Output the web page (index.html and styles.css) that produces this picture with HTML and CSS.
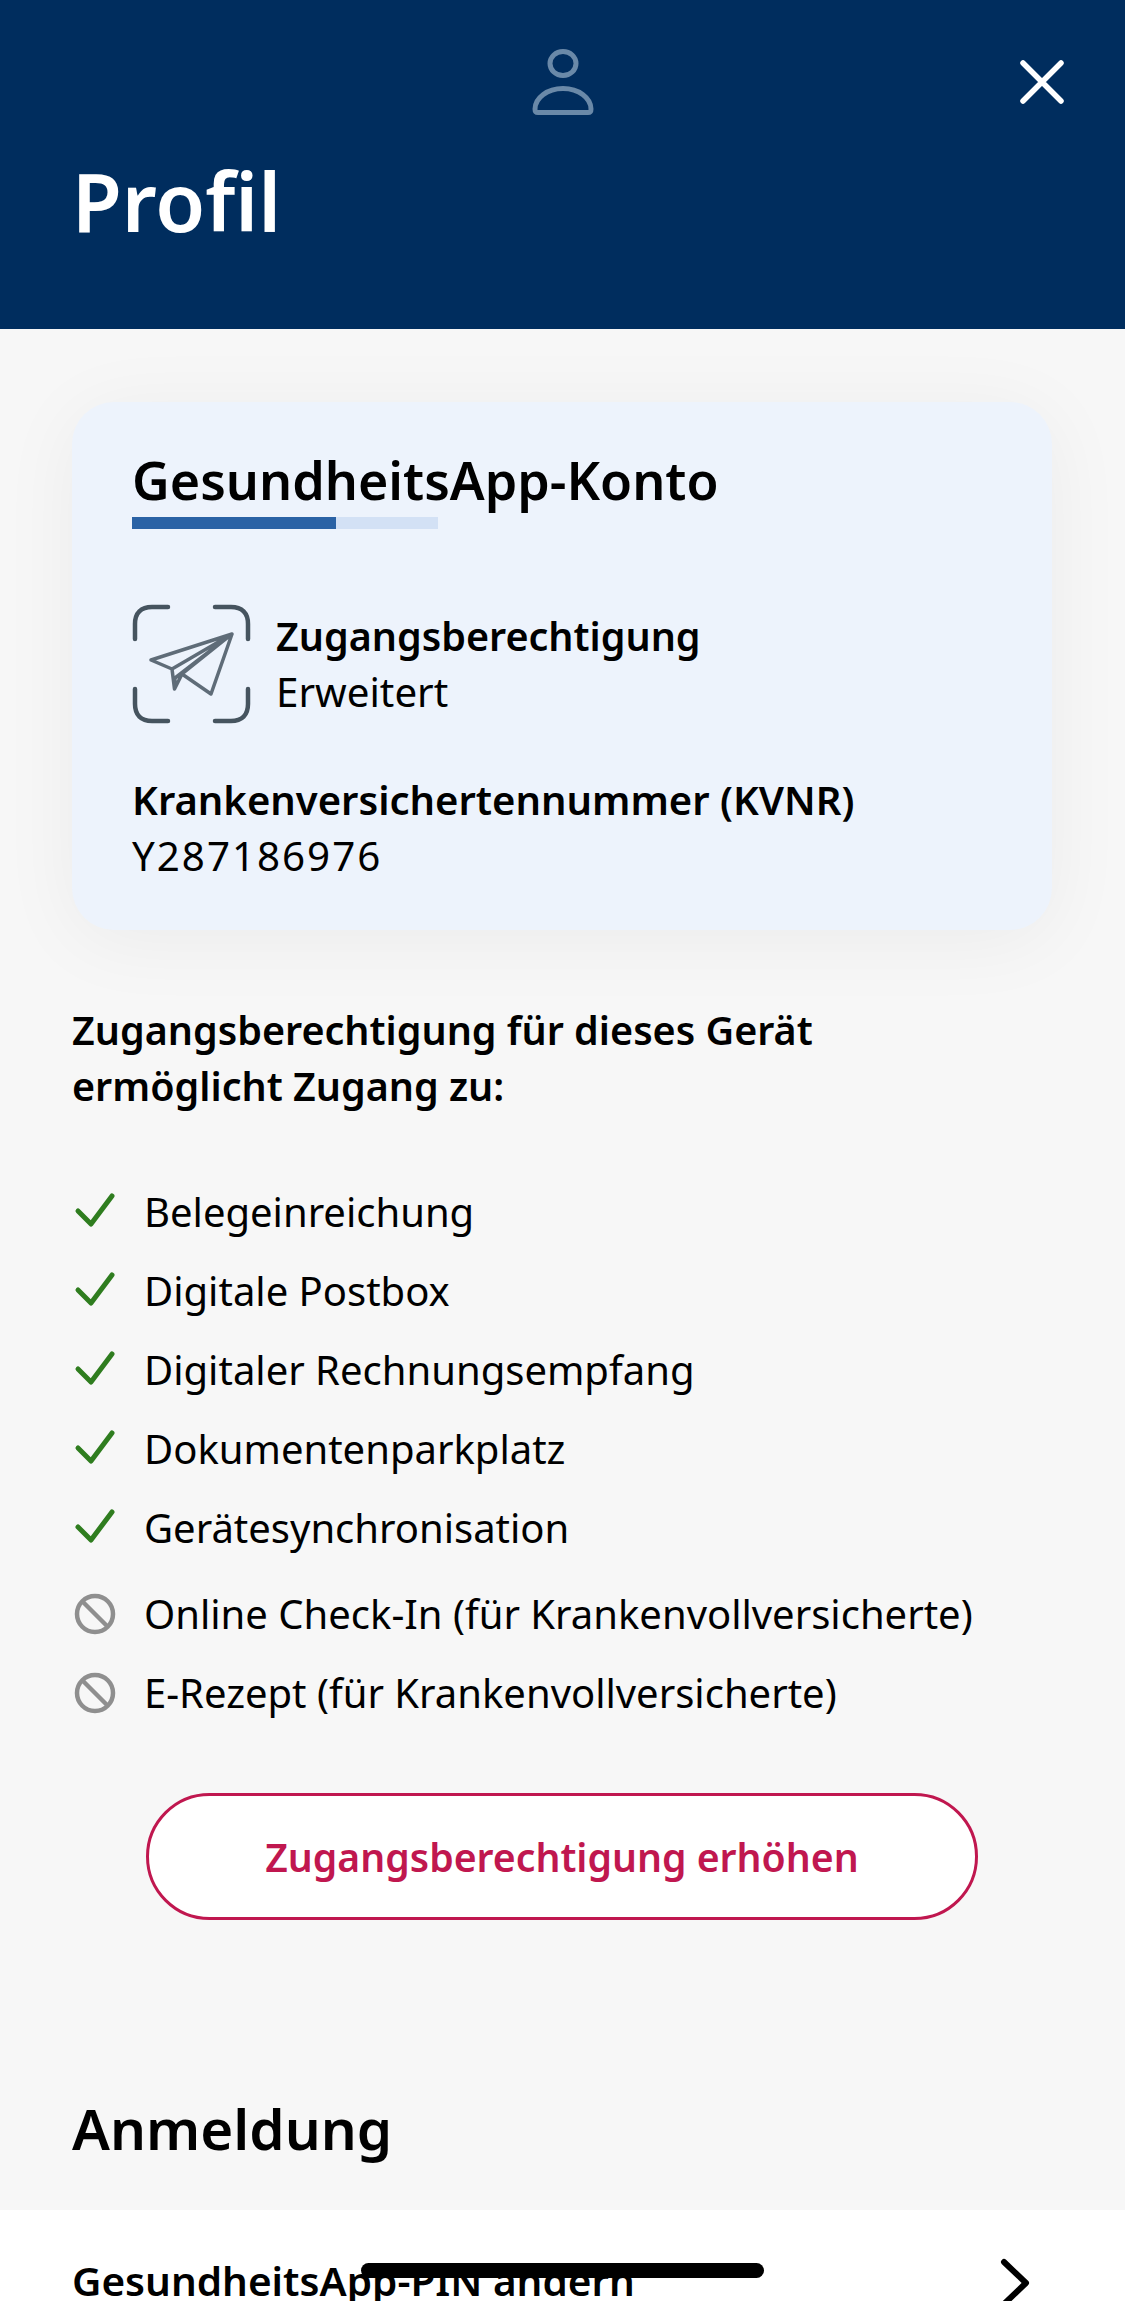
FILE: index.html
```html
<!DOCTYPE html>
<html lang="de">
<head>
    <meta charset="UTF-8">
    <title>Profil</title>
    <link rel="stylesheet" href="styles.css">
</head>
<body>

<header class="top">
    <div class="top-bar">
        <svg class="user-icon" viewBox="0 0 70 70" fill="none" stroke="#6a89a8" stroke-width="5">
            <ellipse cx="35" cy="17.500" rx="13" ry="12"/>
            <path d="M7 63 C7 52 19 42.500 35 42.500 C51 42.500 63 52 63 63 C63 65.500 62 66.500 60 66.500 H10 C8 66.500 7 65.500 7 63 Z" stroke-linejoin="round"/>
        </svg>
        <svg class="close-icon" viewBox="0 0 44 44" fill="none" stroke="#fff" stroke-width="5.500" stroke-linecap="round">
            <path d="M3 3 L41 41 M41 3 L3 41"/>
        </svg>
    </div>
    <h1>Profil</h1>
</header>

<main class="content">
    <section class="card">
        <h2>GesundheitsApp-Konto</h2>
        <div class="level"><div class="level-fill"></div></div>

        <div class="access">
            <svg class="access-icon" viewBox="0 0 120 120" fill="none" stroke="#46545f" stroke-linecap="round" stroke-linejoin="round">
                <path stroke-width="4.500" d="M3 35 V20 C3 9 9 3 20 3 H36 M83 3 H99 C110 3 116 9 116 20 V35 M3 85 V100 C3 111 9 117 20 117 H36 M83 117 H99 C110 117 116 111 116 100 V85"/>
                <path stroke="#5f6c78" stroke-width="3.500" d="M100 30 L19 56 L40 65 Z M100 30 L79 90 L50 70 Z M100 30 L43 74 M40 65 L42.500 85 L50 70 M43 74 L42.500 85"/>
            </svg>
            <div>
                <div class="strong">Zugangsberechtigung</div>
                <div>Erweitert</div>
            </div>
        </div>

        <div class="strong kvnr-label">Krankenversichertennummer (KVNR)</div>
        <div class="kvnr">Y287186976</div>
    </section>

    <p class="strong intro">Zugangsberechtigung für dieses Gerät<br>ermöglicht Zugang zu:</p>

    <ul class="features">
        <li>
            <svg class="check" viewBox="0 0 44 40" fill="none" stroke="#2f7d1f" stroke-width="5" stroke-linecap="round" stroke-linejoin="round"><path d="M5 19 L18 32 L39 4"/></svg>
            Belegeinreichung
        </li>
        <li>
            <svg class="check" viewBox="0 0 44 40" fill="none" stroke="#2f7d1f" stroke-width="5" stroke-linecap="round" stroke-linejoin="round"><path d="M5 19 L18 32 L39 4"/></svg>
            Digitale Postbox
        </li>
        <li>
            <svg class="check" viewBox="0 0 44 40" fill="none" stroke="#2f7d1f" stroke-width="5" stroke-linecap="round" stroke-linejoin="round"><path d="M5 19 L18 32 L39 4"/></svg>
            Digitaler Rechnungsempfang
        </li>
        <li>
            <svg class="check" viewBox="0 0 44 40" fill="none" stroke="#2f7d1f" stroke-width="5" stroke-linecap="round" stroke-linejoin="round"><path d="M5 19 L18 32 L39 4"/></svg>
            Dokumentenparkplatz
        </li>
        <li>
            <svg class="check" viewBox="0 0 44 40" fill="none" stroke="#2f7d1f" stroke-width="5" stroke-linecap="round" stroke-linejoin="round"><path d="M5 19 L18 32 L39 4"/></svg>
            Gerätesynchronisation
        </li>
        <li class="first-off">
            <svg class="ban" viewBox="0 0 44 44" fill="none" stroke="#8f8f8f" stroke-width="4.500"><circle cx="22" cy="22" r="18"/><path d="M9 9 L35 35"/></svg>
            Online Check-In (für Krankenvollversicherte)
        </li>
        <li>
            <svg class="ban" viewBox="0 0 44 44" fill="none" stroke="#8f8f8f" stroke-width="4.500"><circle cx="22" cy="22" r="18"/><path d="M9 9 L35 35"/></svg>
            E-Rezept (für Krankenvollversicherte)
        </li>
    </ul>

    <button class="raise">Zugangsberechtigung erhöhen</button>

    <h2 class="section-title">Anmeldung</h2>
</main>

<div class="menu-row">
    <span class="strong row-label">GesundheitsApp-PIN ändern</span>
    <svg class="chevron" viewBox="0 0 30 50" fill="none" stroke="#000" stroke-width="6" stroke-linecap="round" stroke-linejoin="round"><path d="M4 4 L26 25 L4 46"/></svg>
</div>

<div class="home-bar"></div>

</body>
</html>
```

FILE: styles.css
```css
html, body {
    margin: 0;
    height: 2301px;
    overflow: hidden;
}
body {
    position: relative;
    background-color: #f7f7f7;
    color: #000;
    font-family: "Noto Sans", Arial, sans-serif;
    font-size: 40.3px;
    line-height: 56px;
}
svg {
    display: block;
    flex: none;
}
.strong {
    font-size: 39.5px;
    font-weight: 600;
}

/* header */
.top {
    height: 329px;
    box-sizing: border-box;
    background-color: #002d5e;
    color: white;
    padding: 46px 61px 0 72px;
}
.top-bar {
    position: relative;
    height: 70px;
    display: flex;
    justify-content: center;
}
.user-icon {
    width: 70px;
    height: 70px;
    margin-right: 11px;
}
.close-icon {
    position: absolute;
    top: 14px;
    right: 0;
    width: 44px;
    height: 44px;
}
.top h1 {
    margin: 35px 0 0;
    font-size: 81px;
    line-height: 100px;
    font-weight: 600;
}

/* content */
.content {
    padding: 73px 73px 0 72px;
    height: 1881px;
    box-sizing: border-box;
}
.card {
    height: 528px;
    box-sizing: border-box;
    padding: 48px 60px 0;
    background-color: #edf3fc;
    border-radius: 42px;
    box-shadow: 0 10px 80px rgba(0, 0, 0, 0.05);
}
.card h2 {
    margin: 0;
    font-size: 52px;
    line-height: 60px;
    font-weight: 600;
}
.level {
    width: 306px;
    height: 12px;
    margin-top: 7px;
    background-color: #d3e1f5;
}
.level-fill {
    width: 204px;
    height: 100%;
    background-color: #2a62a5;
}
.access {
    display: flex;
    align-items: center;
    gap: 24px;
    margin-top: 75px;
    margin-bottom: 48px;
}
.access-icon {
    width: 120px;
    height: 120px;
}
.kvnr-label {
    font-size: 40px;
}
.kvnr {
    letter-spacing: 2px;
}
.intro {
    margin: 72px 0 0;
}
.features {
    list-style: none;
    margin: 58px 0 0;
    padding: 0;
    font-size: 40px;
}
.features li {
    position: relative;
    height: 79px;
    display: flex;
    align-items: center;
    padding-left: 72px;
}
.features .first-off {
    margin-top: 7px;
}
.check {
    position: absolute;
    left: 1px;
    top: 20px;
    width: 44px;
    height: 40px;
}
.ban {
    position: absolute;
    left: 1px;
    top: 18px;
    width: 44px;
    height: 44px;
}
.raise {
    display: block;
    width: 832px;
    height: 127px;
    margin: 61px 0 0 74px;
    background-color: white;
    border: 3px solid #c0174f;
    border-radius: 64px;
    color: #c0174f;
    font-family: inherit;
    font-size: 39.200px;
    font-weight: 600;
}
.section-title {
    margin: 173px 0 0;
    font-size: 56.500px;
    line-height: 72px;
    font-weight: 600;
}

/* list row under the section title */
.menu-row {
    height: 91px;
    box-sizing: border-box;
    display: flex;
    justify-content: space-between;
    align-items: flex-start;
    padding: 43px 95px 0 72px;
    background-color: white;
}
.row-label {
    font-size: 40.500px;
}
.chevron {
    width: 30px;
    height: 50px;
    margin-top: 5px;
}
.home-bar {
    position: absolute;
    left: 361px;
    top: 2263px;
    width: 403px;
    height: 15px;
    border-radius: 8px;
    background-color: black;
}
```
